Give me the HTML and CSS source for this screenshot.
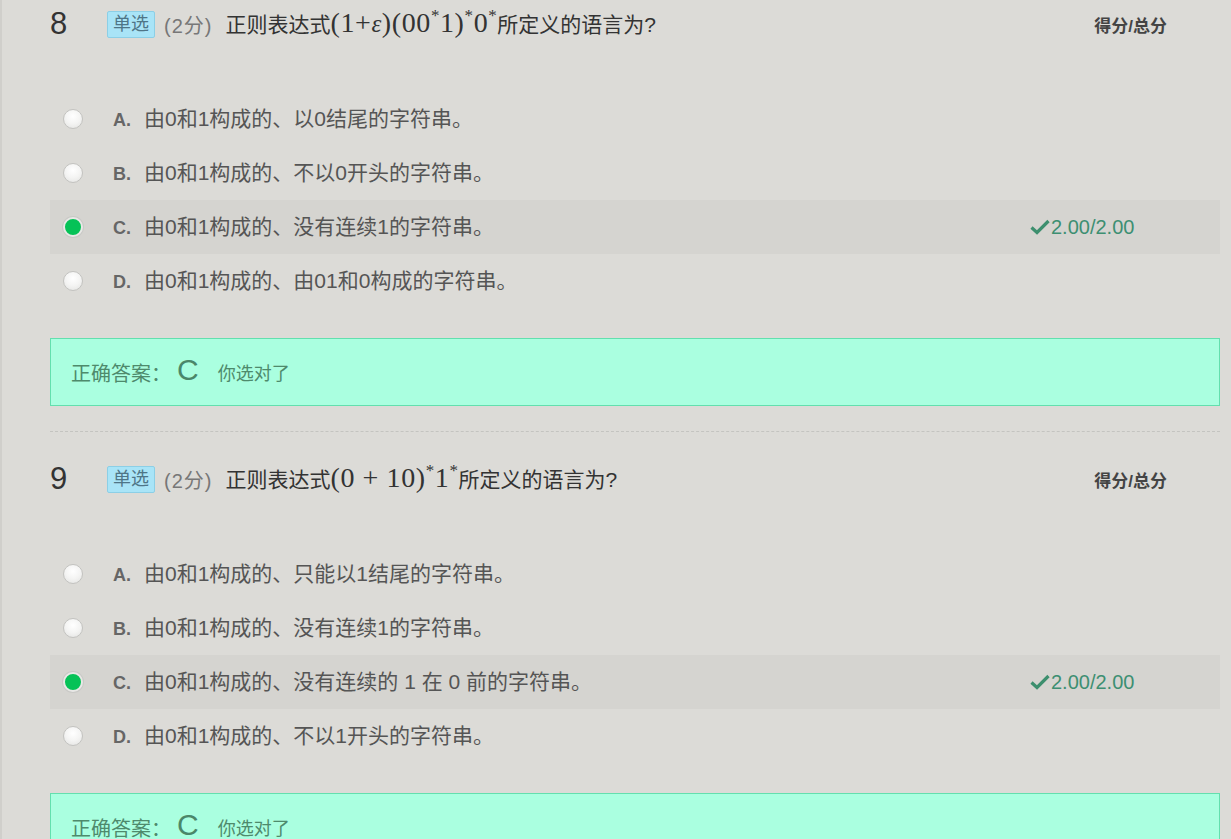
FILE: index.html
```html
<!DOCTYPE html>
<html lang="zh">
<head>
<meta charset="utf-8">
<link rel="stylesheet" href="styles.css">
</head>
<body>
<div class="page">
  <div class="question">
    <div class="q-head">
      <span class="q-num">8</span>
      <span class="badge">单选</span>
      <span class="score-pts">(2分)</span>
      <span class="q-text">正则表达式<span class="math">(1+<i>ε</i>)(00<sup>*</sup>1)<sup>*</sup>0<sup>*</sup></span>所定义的语言为?</span>
      <span class="q-total">得分/总分</span>
    </div>
    <div class="options">
      <div class="opt"><span class="radio"></span><span class="opt-body"><span class="opt-label">A.</span><span class="opt-text">由0和1构成的、以0结尾的字符串。</span></span></div>
      <div class="opt"><span class="radio"></span><span class="opt-body"><span class="opt-label">B.</span><span class="opt-text">由0和1构成的、不以0开头的字符串。</span></span></div>
      <div class="opt opt-chosen"><span class="radio radio-on"></span><span class="opt-body"><span class="opt-label">C.</span><span class="opt-text">由0和1构成的、没有连续1的字符串。</span></span><span class="opt-score"><svg class="check" viewBox="0 0 20 16" width="20" height="16"><path d="M1.5 8.5 L7 13.5 L18.5 2" fill="none" stroke="#3d8f6e" stroke-width="3.2"/></svg>2.00/2.00</span></div>
      <div class="opt"><span class="radio"></span><span class="opt-body"><span class="opt-label">D.</span><span class="opt-text">由0和1构成的、由01和0构成的字符串。</span></span></div>
    </div>
    <div class="answer"><span class="ans-label">正确答案：</span><span class="ans-key">C</span><span class="ans-note">你选对了</span></div>
  </div>
  <div class="divider"></div>
  <div class="question">
    <div class="q-head">
      <span class="q-num">9</span>
      <span class="badge">单选</span>
      <span class="score-pts">(2分)</span>
      <span class="q-text">正则表达式<span class="math">(0 + 10)<sup>*</sup>1<sup>*</sup></span>所定义的语言为?</span>
      <span class="q-total">得分/总分</span>
    </div>
    <div class="options">
      <div class="opt"><span class="radio"></span><span class="opt-body"><span class="opt-label">A.</span><span class="opt-text">由0和1构成的、只能以1结尾的字符串。</span></span></div>
      <div class="opt"><span class="radio"></span><span class="opt-body"><span class="opt-label">B.</span><span class="opt-text">由0和1构成的、没有连续1的字符串。</span></span></div>
      <div class="opt opt-chosen"><span class="radio radio-on"></span><span class="opt-body"><span class="opt-label">C.</span><span class="opt-text">由0和1构成的、没有连续的 1 在 0 前的字符串。</span></span><span class="opt-score"><svg class="check" viewBox="0 0 20 16" width="20" height="16"><path d="M1.5 8.5 L7 13.5 L18.5 2" fill="none" stroke="#3d8f6e" stroke-width="3.2"/></svg>2.00/2.00</span></div>
      <div class="opt"><span class="radio"></span><span class="opt-body"><span class="opt-label">D.</span><span class="opt-text">由0和1构成的、不以1开头的字符串。</span></span></div>
    </div>
    <div class="answer"><span class="ans-label">正确答案：</span><span class="ans-key">C</span><span class="ans-note">你选对了</span></div>
  </div>
</div>
</body>
</html>
```
FILE: styles.css
```css
html, body {
  margin: 0;
  padding: 0;
}
body {
  background: #dcdbd7;
  font-family: "Liberation Sans", "Noto Sans CJK SC", sans-serif;
  color: #333;
  overflow: hidden;
}
.page {
  border-left: 2px solid #d0cfcb;
  padding: 0 11px 0 48px;
}
.question {
  display: flex;
  flex-direction: column;
}
.q-head {
  display: flex;
  align-items: center;
  height: 48px;
}
.q-num {
  width: 57px;
  font-size: 31px;
  color: #333;
}
.badge {
  display: inline-block;
  box-sizing: border-box;
  height: 27px;
  line-height: 25px;
  padding: 0 5px;
  background: #a9e4f7;
  border: 1px solid #8ccfe6;
  border-radius: 2px;
  font-size: 18px;
  color: #4f7587;
}
.score-pts {
  margin-left: 9px;
  font-size: 20px;
  color: #777;
  letter-spacing: 1px;
}
.q-text {
  margin-left: 13px;
  font-size: 21px;
  color: #333;
  display: flex;
  align-items: center;
  padding-bottom: 2px;
}
.math {
  font-family: "Liberation Serif", serif;
  font-size: 28px;
  letter-spacing: 0.6px;
  color: #333;
}
.math i {
  font-size: 25px;
}
.math sup {
  font-size: 17px;
  vertical-align: 11px;
  line-height: 0;
}
.q-total {
  margin-left: auto;
  margin-right: 53px;
  font-size: 17px;
  font-weight: bold;
  color: #444;
}
.options {
  margin-top: 44px;
  display: flex;
  flex-direction: column;
}
.opt {
  display: flex;
  align-items: center;
  height: 54px;
}
.opt-chosen {
  background: #d5d4d0;
}
.radio {
  box-sizing: border-box;
  width: 20px;
  height: 20px;
  margin-left: 13px;
  border-radius: 50%;
  border: 1px solid #c3c3c0;
  background: radial-gradient(circle at 50% 35%, #ffffff 0%, #f4f4f3 50%, #e2e2e0 100%);
  flex: none;
}
.radio-on {
  border: 2px solid #e8e8e6;
  background: #06c257;
  box-shadow: 0 0 0 1px #c9c9c6;
}
.opt-body {
  display: flex;
  align-items: baseline;
  margin-left: 30px;
  padding-bottom: 4px;
}
.opt-label {
  width: 31px;
  font-size: 18px;
  font-weight: bold;
  color: #666;
}
.opt-text {
  font-size: 21px;
  color: #555;
}
.opt-score {
  margin-left: auto;
  width: 190px;
  display: flex;
  align-items: center;
  gap: 1px;
  font-size: 20px;
  color: #3d8f72;
}
.check {
  flex: none;
}
.answer {
  margin-top: 30px;
  box-sizing: border-box;
  height: 68px;
  display: flex;
  align-items: center;
  padding-left: 20px;
  background: #aaffe0;
  border: 1px solid #63dfae;
}
.ans-label {
  font-size: 20px;
  color: #4e8a6c;
}
.ans-key {
  margin-left: 6px;
  font-size: 30px;
  color: #4a8769;
  position: relative;
  top: -2px;
}
.ans-note {
  margin-left: 19px;
  font-size: 18px;
  color: #4e8a6c;
}
.divider {
  margin-top: 25px;
  margin-bottom: 23px;
  border-top: 1px dashed #c4c4c0;
}
```
